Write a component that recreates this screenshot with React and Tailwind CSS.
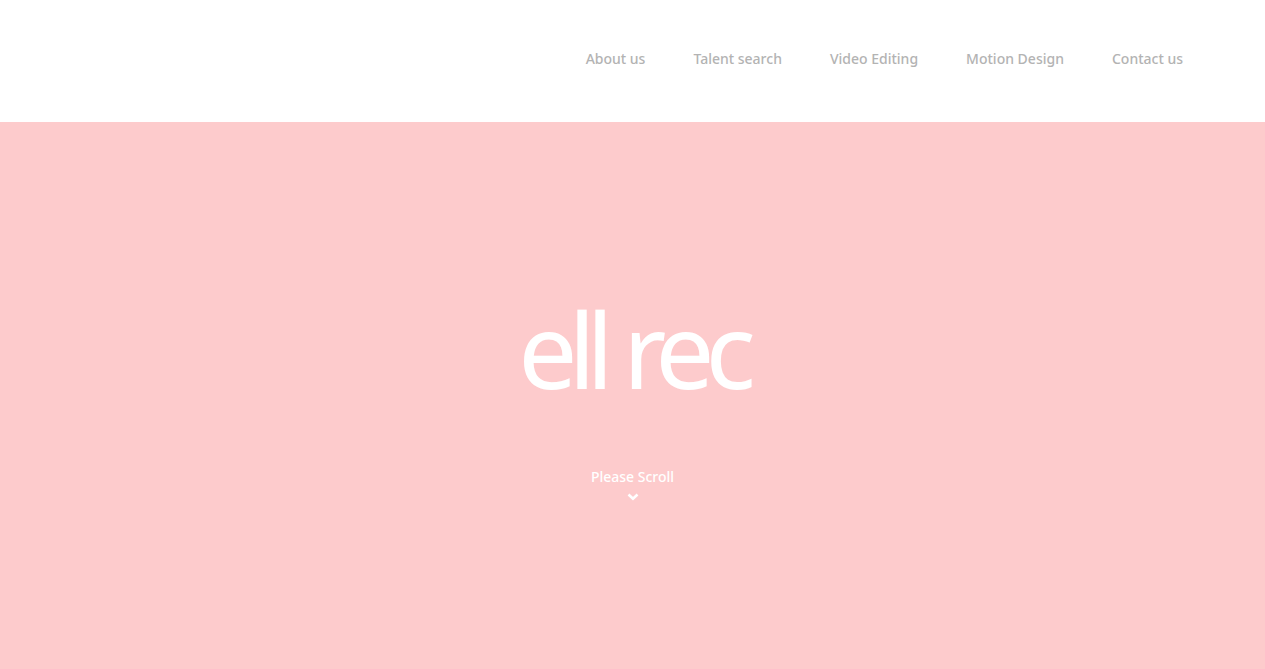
import React from "react";

const links = ["About us", "Talent search", "Video Editing", "Motion Design", "Contact us"];

export default function App() {
  return (
    <div className="flex min-h-screen flex-col bg-white font-['Noto_Sans',sans-serif]">
      <header className="flex justify-end pt-[47px] pr-[82px] pb-[51px]">
        <nav aria-label="Main" className="flex gap-12 text-[14px] leading-6 font-medium text-[#b3b3b3]">
          {links.map((label) => (
            <a key={label} href="#" className="whitespace-nowrap">{label}</a>
          ))}
        </nav>
      </header>
      <main className="flex grow flex-col items-center justify-center bg-[#fdcbcc] pb-0.5 text-white">
        <h1 className="text-[105px] leading-[120px] tracking-[-9px]">ell rec</h1>
        <a href="#" className="mt-14 flex flex-col items-center gap-1 text-[14px] leading-6 font-medium">
          Please Scroll
          <svg className="h-2 w-3" viewBox="0 0 12 8" fill="none" stroke="currentColor" strokeWidth="2.6" aria-hidden="true">
            <path d="M1.5 1.5 6 5.8l4.5-4.3" />
          </svg>
        </a>
      </main>
    </div>
  );
}
